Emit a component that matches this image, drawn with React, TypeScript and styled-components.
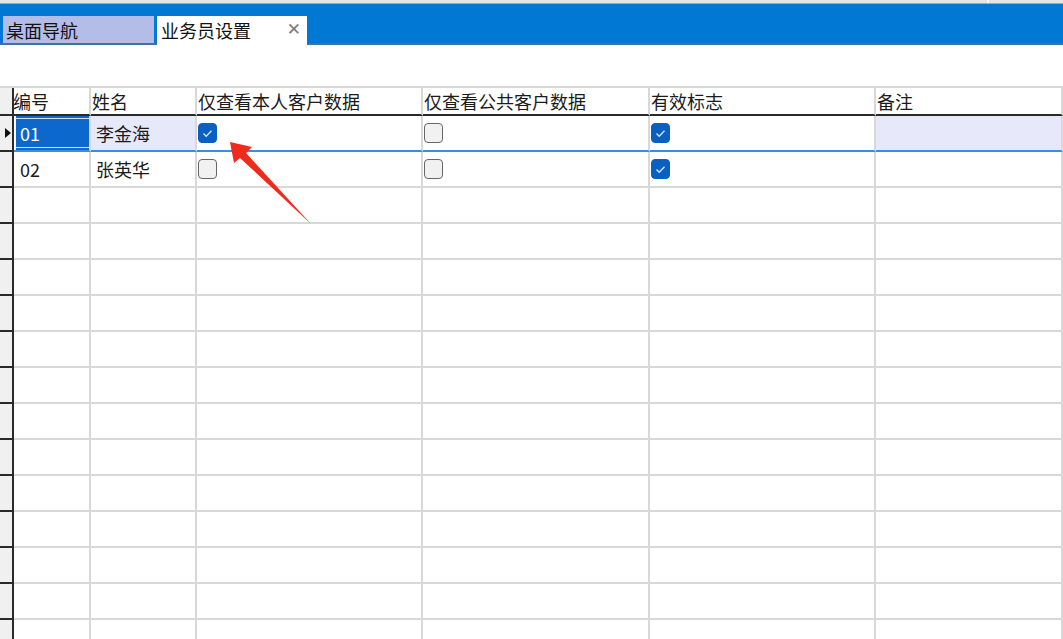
import React from 'react'
import styled, { createGlobalStyle } from 'styled-components'

const GlobalStyle = createGlobalStyle`
  html, body {
    margin: 0;
    padding: 0;
    background: #ffffff;
  }
  body {
    font-family: "Noto Sans CJK SC", "Noto Sans", sans-serif;
    color: #1b1b1b;
  }
`

const Page = styled.div`
  position: relative;
  width: 1063px;
  height: 639px;
  overflow: hidden;
  background: #fff;
`

const TitleStrip = styled.div`
  display: flex;
  height: 3px;
  background: #e4e4e4;
  border-bottom: 1px solid #a8a8a8;
`

const StripPane = styled.div<{ $w?: number }>`
  width: ${({ $w }) => ($w ? `${$w}px` : 'auto')};
  flex: ${({ $w }) => ($w ? 'none' : '1')};
  border-left: ${({ $w }) => ($w ? 'none' : '2px solid #f7f7f7')};
`

const TabBar = styled.div`
  display: flex;
  align-items: flex-end;
  gap: 3px;
  height: 39px;
  padding-left: 3px;
  background: #0078d4;
  border-bottom: 2px solid #3f72a0;
`

const Tab = styled.div<{ $active?: boolean }>`
  display: flex;
  align-items: center;
  box-sizing: border-box;
  width: ${({ $active }) => ($active ? 150 : 151)}px;
  height: ${({ $active }) => ($active ? 29 : 27)}px;
  margin-bottom: ${({ $active }) => ($active ? -2 : 0)}px;
  padding: ${({ $active }) => ($active ? '0 6px 2px 4px' : '0 4px 0 3px')};
  background: ${({ $active }) => ($active ? '#ffffff' : '#b3bde8')};
  font-size: 18px;
  line-height: 1;
  color: #111;
`

const TabLabel = styled.span`
  flex: 1;
  white-space: nowrap;
`

const CloseX = styled.span`
  font-family: "DejaVu Sans", sans-serif;
  font-size: 17px;
  color: #7c7c7c;
  line-height: 1;
`

const Spacer = styled.div`
  height: 41px;
`

const Grid = styled.div`
  border-top: 2px solid #d8d8d8;
`

const Row = styled.div<{ $h: number }>`
  display: flex;
  height: ${({ $h }) => $h}px;
`

const Indicator = styled.div<{ $line: string }>`
  position: relative;
  flex: none;
  width: 12px;
  background: #f0f0f0;
  border-right: 2px solid #2a2a2a;
  border-bottom: 2px solid ${({ $line }) => $line};
  z-index: 1;
`

const Pointer = styled.span`
  position: absolute;
  left: 5px;
  top: 50%;
  margin-top: -5px;
  width: 0;
  height: 0;
  border-top: 5px solid transparent;
  border-bottom: 5px solid transparent;
  border-left: 6px solid #111;
`

const Cell = styled.div<{ $w?: number; $line: string; $bg?: string; $pad?: number }>`
  display: flex;
  align-items: center;
  box-sizing: border-box;
  flex: ${({ $w }) => ($w ? 'none' : '1')};
  width: ${({ $w }) => ($w ? `${$w}px` : 'auto')};
  padding-left: ${({ $pad }) => $pad ?? 0}px;
  overflow: hidden;
  white-space: nowrap;
  background: ${({ $bg }) => $bg ?? 'transparent'};
  border-right: 2px solid #d8d8d8;
  border-bottom: 2px solid ${({ $line }) => $line};
  font-size: 18px;
  line-height: 1;
`

const HeadText = styled.span<{ $shift?: number }>`
  margin-left: ${({ $shift }) => $shift ?? 0}px;
`

const FocusCell = styled.div`
  display: flex;
  align-items: center;
  box-sizing: border-box;
  width: 100%;
  height: 100%;
  margin-left: 2px;
  padding-left: 4px;
  background: #0c68cd;
  box-shadow: inset 0 2px 0 #0c68cd, inset 0 3px 0 #cfe1f6, inset 0 -2px 0 #0c68cd, inset 0 -3px 0 #cfe1f6;
  color: #fff;
`

const Box = styled.span<{ $on: boolean }>`
  display: inline-flex;
  align-items: center;
  justify-content: center;
  box-sizing: border-box;
  width: 19px;
  height: 20px;
  margin-left: 1px;
  border-radius: 4px;
  background: ${({ $on }) => ($on ? '#0a5fc2' : '#f1f1f1')};
  border: ${({ $on }) => ($on ? '1px solid #0a5fc2' : '1.5px solid #666666')};
`

const ArrowLayer = styled.svg`
  position: absolute;
  left: 0;
  top: 0;
  pointer-events: none;
  z-index: 5;
`

const cols = [77, 106, 226, 227, 226]

type Person = { id: string; name: string; own: boolean; pub: boolean; valid: boolean }

const people: Person[] = [
  { id: '01', name: '李金海', own: true, pub: false, valid: true },
  { id: '02', name: '张英华', own: false, pub: false, valid: true },
]

const headers = ['编号', '姓名', '仅查看本人客户数据', '仅查看公共客户数据', '有效标志', '备注']

const Check = ({ on }: { on: boolean }) => (
  <Box $on={on}>
    {on && (
      <svg width="11" height="9" viewBox="0 0 11 9">
        <path d="M1.5 4.6 L4.2 7.2 L9.5 1.8" fill="none" stroke="#d6e6fb" strokeWidth="1.4" />
      </svg>
    )}
  </Box>
)

const GRID_LINE = '#d8d8d8'

export default function App() {
  const emptyRows = Array.from({ length: 13 })

  return (
    <Page>
      <GlobalStyle />
      <TitleStrip>
        <StripPane $w={987} />
        <StripPane />
      </TitleStrip>
      <TabBar>
        <Tab>
          <TabLabel>桌面导航</TabLabel>
        </Tab>
        <Tab $active>
          <TabLabel>业务员设置</TabLabel>
          <CloseX>✕</CloseX>
        </Tab>
      </TabBar>
      <Spacer />

      <Grid>
        <Row $h={28}>
          <Indicator $line="#2a2a2a" />
          {headers.map((h, i) => (
            <Cell key={h} $w={cols[i]} $line="#2a2a2a" $pad={i === 0 ? 0 : 1}>
              <HeadText $shift={i === 0 ? -1 : 0}>{h}</HeadText>
            </Cell>
          ))}
        </Row>

        {people.map((p, r) => {
          const selected = r === 0
          const line = selected ? '#3a8ddf' : GRID_LINE
          const tint = selected ? '#e7e8fa' : undefined
          return (
            <Row key={p.id} $h={36}>
              <Indicator $line="#2a2a2a">{selected && <Pointer />}</Indicator>
              <Cell $w={cols[0]} $line={line} $pad={selected ? 0 : 6}>
                {selected ? <FocusCell>{p.id}</FocusCell> : p.id}
              </Cell>
              <Cell $w={cols[1]} $line={line} $bg={tint} $pad={5}>
                {p.name}
              </Cell>
              <Cell $w={cols[2]} $line={line}>
                <Check on={p.own} />
              </Cell>
              <Cell $w={cols[3]} $line={line}>
                <Check on={p.pub} />
              </Cell>
              <Cell $w={cols[4]} $line={line}>
                <Check on={p.valid} />
              </Cell>
              <Cell $line={line} $bg={tint} />
            </Row>
          )
        })}

        {emptyRows.map((_, r) => (
          <Row key={`e${r}`} $h={36}>
            <Indicator $line="#2a2a2a" />
            {cols.map((w, i) => (
              <Cell key={i} $w={w} $line={GRID_LINE} />
            ))}
            <Cell $line={GRID_LINE} />
          </Row>
        ))}
      </Grid>

      <ArrowLayer width="1063" height="639" viewBox="0 0 1063 639">
        <polygon
          points="230,142 252,147 246,153 311,224 240,158 234,163"
          fill="#ee2b1c"
        />
      </ArrowLayer>
    </Page>
  )
}
